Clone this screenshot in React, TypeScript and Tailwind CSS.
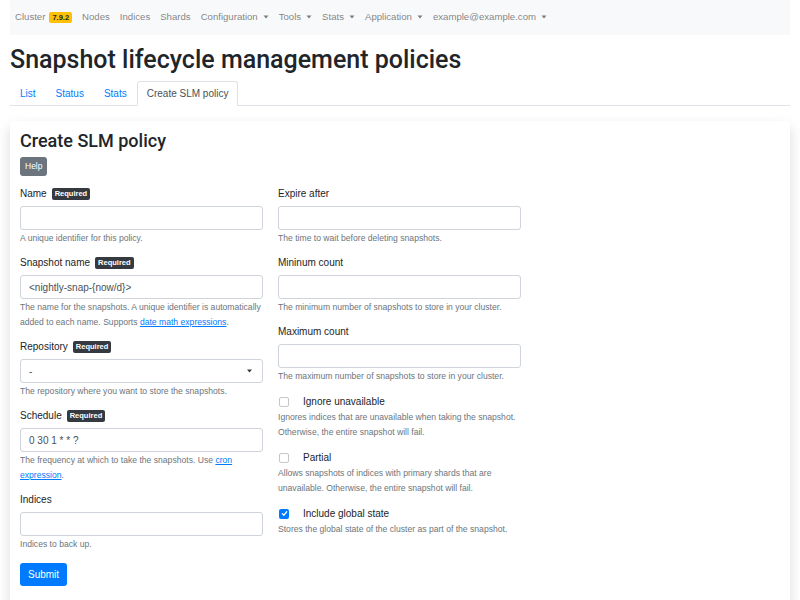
import type { ReactNode } from "react";

type Field = {
  label: string;
  required?: boolean;
  value?: string;
  select?: boolean;
  help: ReactNode;
};

type Check = {
  label: string;
  checked?: boolean;
  help: string;
};

const LEFT_FIELDS: Field[] = [
  {
    label: "Name",
    required: true,
    help: "A unique identifier for this policy.",
  },
  {
    label: "Snapshot name",
    required: true,
    value: "<nightly-snap-{now/d}>",
    help: (
      <>
        The name for the snapshots. A unique identifier is automatically
        added to each name. Supports{" "}
        <a href="#" className="text-[#007bff] underline">
          date math expressions
        </a>
        .
      </>
    ),
  },
  {
    label: "Repository",
    required: true,
    value: "-",
    select: true,
    help: "The repository where you want to store the snapshots.",
  },
  {
    label: "Schedule",
    required: true,
    value: "0 30 1 * * ?",
    help: (
      <>
        The frequency at which to take the snapshots. Use{" "}
        <a href="#" className="text-[#007bff] underline">
          cron expression
        </a>
        .
      </>
    ),
  },
  {
    label: "Indices",
    help: "Indices to back up.",
  },
];

const RIGHT_FIELDS: Field[] = [
  {
    label: "Expire after",
    help: "The time to wait before deleting snapshots.",
  },
  {
    label: "Mininum count",
    help: "The minimum number of snapshots to store in your cluster.",
  },
  {
    label: "Maximum count",
    help: "The maximum number of snapshots to store in your cluster.",
  },
];

const CHECKS: Check[] = [
  {
    label: "Ignore unavailable",
    help: "Ignores indices that are unavailable when taking the snapshot. Otherwise, the entire snapshot will fail.",
  },
  {
    label: "Partial",
    help: "Allows snapshots of indices with primary shards that are unavailable. Otherwise, the entire snapshot will fail.",
  },
  {
    label: "Include global state",
    checked: true,
    help: "Stores the global state of the cluster as part of the snapshot.",
  },
];

const NAV_ITEMS = [
  { label: "Nodes" },
  { label: "Indices" },
  { label: "Shards" },
  { label: "Configuration", dropdown: true },
  { label: "Tools", dropdown: true },
  { label: "Stats", dropdown: true },
  { label: "Application", dropdown: true },
  { label: "example@example.com", dropdown: true },
];

const TABS = ["List", "Status", "Stats"];

function Caret() {
  return (
    <svg width="6" height="4" viewBox="0 0 6 4" className="ml-[5px]">
      <path d="M0.5 0.5h5L3 3.5z" fill="currentColor" />
    </svg>
  );
}

function FormField({ field }: { field: Field }) {
  return (
    <div className="mb-[9px]">
      <div className="flex h-4 items-center gap-[5px] text-[10px] leading-4 text-[#212529]">
        <span>{field.label}</span>
        {field.required ? (
          <span className="rounded-[2px] bg-[#343a40] px-[3px] text-[7.5px] font-bold leading-[12px] text-white">
            Required
          </span>
        ) : null}
      </div>

      <div className="mt-1 flex h-6 items-center justify-between rounded-[3px] border border-[#ced4da] bg-white px-2 text-[10px] text-[#495057]">
        <span>{field.value ?? ""}</span>
        {field.select ? (
          <svg width="5" height="4" viewBox="0 0 5 4" className="mr-[2px]">
            <path d="M0 0.5h5L2.5 3.5z" fill="#343a40" />
          </svg>
        ) : null}
      </div>

      <p className="mt-px text-[8.6px] leading-[15px] text-[#6c757d]">
        {field.help}
      </p>
    </div>
  );
}

function CheckField({ check }: { check: Check }) {
  return (
    <div className="mb-[9px]">
      <div className="flex h-[17px] items-center">
        {check.checked ? (
          <span className="ml-px flex h-[10px] w-[10px] items-center justify-center rounded-[2px] bg-[#007bff]">
            <svg width="7" height="7" viewBox="0 0 8 8">
              <path
                d="M1.5 4.2l1.8 1.8 3.2-4"
                fill="none"
                stroke="white"
                strokeWidth="1.4"
                strokeLinecap="round"
                strokeLinejoin="round"
              />
            </svg>
          </span>
        ) : (
          <span className="ml-px h-[10px] w-[10px] rounded-[2px] border border-[#c4c8cc] bg-white" />
        )}
        <span className="ml-[14px] text-[10px] text-[#212529]">
          {check.label}
        </span>
      </div>
      <p className="text-[8.6px] leading-[15px] text-[#6c757d]">
        {check.help}
      </p>
    </div>
  );
}

export default function App() {
  return (
    <div className="min-h-screen bg-white px-[10px] font-['Liberation_Sans',Arial,sans-serif] text-[#212529]">
      <nav className="flex h-[35px] items-center bg-[#f8f9fa] text-[9.6px] text-[rgba(0,0,0,0.5)]">
        <a href="#" className="flex items-center px-[5px]">
          Cluster
          <span className="ml-1 rounded-[2px] bg-[#ffc107] px-[3px] text-[7.5px] font-bold leading-[11px] text-[#212529]">
            7.9.2
          </span>
        </a>
        {NAV_ITEMS.map((item) => (
          <a
            key={item.label}
            href="#"
            className="flex items-center px-[5px]"
          >
            {item.label}
            {item.dropdown ? <Caret /> : null}
          </a>
        ))}
      </nav>

      <h1 className="mt-[10px] font-['Roboto',Arial,sans-serif] text-[25px] font-medium leading-[30px]">
        Snapshot lifecycle management policies
      </h1>

      <div className="mt-[6px] flex border-b border-[#dee2e6] text-[10px]">
        {TABS.map((tab) => (
          <a
            key={tab}
            href="#"
            className="-mb-px flex h-[25px] items-center border border-transparent px-[9px] text-[#007bff]"
          >
            {tab}
          </a>
        ))}
        <span className="-mb-px flex h-[25px] items-center rounded-t-[3px] border border-[#dee2e6] border-b-white bg-white px-[9px] text-[#495057]">
          Create SLM policy
        </span>
      </div>

      <div className="mt-[15px] rounded-[4px] bg-white px-[10px] pb-[30px] pt-[10px] shadow-[0_6px_14px_rgba(0,0,0,0.15)]">
        <h2 className="font-['Roboto',Arial,sans-serif] text-[18px] font-medium leading-5">
          Create SLM policy
        </h2>
        <button className="mt-[6px] h-[19px] rounded-[3px] bg-[#6c757d] px-[5px] text-[8.5px] text-white">
          Help
        </button>

        <div className="mt-[10px] grid grid-cols-[243px_243px] gap-x-[15px]">
          <div>
            {LEFT_FIELDS.map((field) => (
              <FormField key={field.label} field={field} />
            ))}
            <button className="h-[23px] rounded-[3px] bg-[#007bff] px-2 text-[10px] text-white">
              Submit
            </button>
          </div>

          <div>
            {RIGHT_FIELDS.map((field) => (
              <FormField key={field.label} field={field} />
            ))}
            {CHECKS.map((check) => (
              <CheckField key={check.label} check={check} />
            ))}
          </div>
        </div>
      </div>
    </div>
  );
}
